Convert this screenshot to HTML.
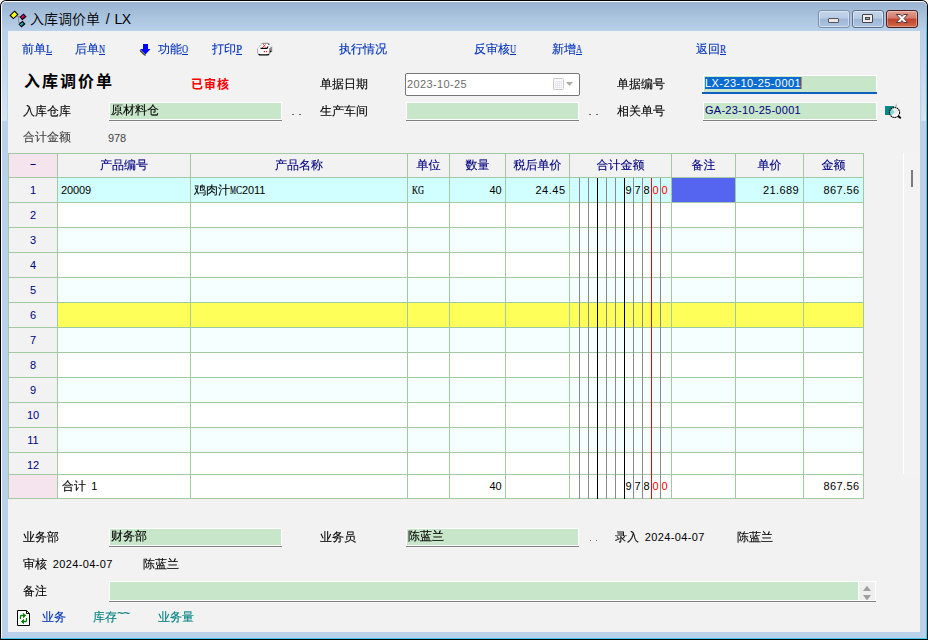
<!DOCTYPE html>
<html><head><meta charset="utf-8"><title>入库调价单 / LX</title>
<style>
*{box-sizing:border-box}
html,body{margin:0;padding:0}
body{width:928px;height:640px;overflow:hidden;background:#fff;position:relative;
 font-family:"Liberation Sans","WenQuanYi Zen Hei","Noto Sans CJK SC",sans-serif;font-size:12px;line-height:14px;color:#000}
.a{position:absolute}
.g{position:absolute;left:0;top:0;width:0;height:0}
.t{position:absolute;white-space:nowrap;font-size:12px;line-height:14px;height:14px;-webkit-text-stroke:0.12px currentColor}
.lk{color:#0033bb}
.tl{color:#008080}
.nv{color:#000080}
.gy{color:#444}
.fld{position:absolute;background:#c8e6c9;border:1px solid #fff;box-shadow:0 1px 0 #808080,0 2px 0 #f7f7f7}
.hl{position:absolute;height:1px;background:#a3c9a3;left:8px;width:856px}
.vl{position:absolute;width:1px;background:#a3c9a3;top:153px;height:346px}
.ml{position:absolute;width:1px;top:178px;height:321px}
.hd{-webkit-text-stroke:0.12px currentColor;position:absolute;top:158px;height:14px;line-height:14px;text-align:center;color:#000080;white-space:nowrap}
.rn{-webkit-text-stroke:0.12px currentColor;position:absolute;left:9px;width:48px;text-align:center;color:#000080;height:14px;line-height:14px}
.n{letter-spacing:-0.67px}
.d{font-size:11px;-webkit-text-stroke:0}
.r{text-align:right}
.k{display:inline-block;transform-origin:0 50%;font-size:12px;font-family:"Liberation Serif",serif;-webkit-text-stroke:0.2px currentColor}
</style></head>
<body>
<div class="g" id="window">
<div class="a" style="left:0;top:0;width:928px;height:640px;background:#000;border-radius:6px 6px 0 0"></div>
<div class="a" style="left:1px;top:1px;width:926px;height:638px;background:#fff;border-radius:5px 5px 0 0"></div>
<div class="a" style="left:2px;top:2px;width:925px;height:637px;border-radius:4px 5px 0 0;background:linear-gradient(#99b4d1 0px,#b9d1ea 29px,#b9d1ea 100%)"></div>
<div class="a" style="left:1px;top:638px;width:926px;height:1px;background:#35cdea"></div>
<div class="a" style="left:926px;top:8px;width:1px;height:631px;background:linear-gradient(rgba(53,205,234,0),#35cdea 24px)"></div>
<div class="a" style="left:8px;top:31px;width:912px;height:601px;background:#f2f2f2"></div>
<div class="a" style="left:2px;top:31px;width:5px;height:90px;background:linear-gradient(rgba(255,255,255,0),rgba(255,255,255,.42))"></div>
<div class="a" style="left:921px;top:31px;width:5px;height:90px;background:linear-gradient(rgba(255,255,255,0),rgba(255,255,255,.42))"></div>
</div>
<div class="g" id="titlebar">
<svg class="a" style="left:9px;top:10px" width="19" height="19" viewBox="0 0 19 19"><path d="M7.7 6.5H11.5M9.5 6.5V12.5H11.5" fill="none" stroke="#909090" stroke-width="1"/><path d="M5.5 1.2L8.8 4.6 4.4 8.6 1.2 5.4z" fill="#ffff00" stroke="#000" stroke-width="1.1"/><path d="M14.5 4.2L16.8 6.6 13.4 9.5 11.3 7.1z" fill="#ff00c8"/><path d="M15.4 5.100L16.8 6.6 13.4 9.5 12.400 8.400z" fill="#c00030"/><path d="M14.5 4.2L16.8 6.6 13.4 9.5 11.3 7.1z" fill="none" stroke="#000" stroke-width="1.1"/><path d="M13.4 11.500L15.700 13.900 12.500 16.700 10.200 14.300z" fill="#00e0e0"/><path d="M14.400 12.500L15.700 13.900 12.500 16.700 11.400 15.500z" fill="#009090"/><path d="M13.4 11.500L15.700 13.900 12.500 16.700 10.200 14.300z" fill="none" stroke="#000" stroke-width="1.1"/></svg>
<div class="t" style="left:30px;top:10px;font-size:14px;line-height:18px;height:18px;font-family:'Liberation Sans','Noto Sans CJK SC',sans-serif;font-weight:350;color:#000;-webkit-text-stroke:0">入库调价单<span style="word-spacing:2.500px;letter-spacing:-0.700px"> / LX</span></div>
<div class="a" style="left:818px;top:10px;width:32px;height:18px;border:1px solid #7d91ad;border-radius:3px;background:linear-gradient(#c3d5ea 0,#b7cbe4 45%,#9db6d4 50%,#adc5e2 100%);box-shadow:inset 0 0 0 1px rgba(255,255,255,.45)"></div>
<div class="a" style="left:828px;top:18px;width:11px;height:5px;border:1px solid #555;border-radius:1px;background:#e8e8e8"></div>
<div class="a" style="left:852px;top:10px;width:32px;height:18px;border:1px solid #5f7088;border-radius:3px;background:linear-gradient(#c3d5ea 0,#b7cbe4 45%,#9db6d4 50%,#adc5e2 100%);box-shadow:inset 0 0 0 1px rgba(255,255,255,.45)"></div>
<div class="a" style="left:862px;top:14px;width:11px;height:9px;border:1px solid #444;border-radius:1px;background:#eee"></div>
<div class="a" style="left:865px;top:17px;width:5px;height:3px;border:1px solid #444;background:#8fa9c9"></div>
<div class="a" style="left:886px;top:10px;width:32px;height:18px;border:1px solid #4b1d1d;border-radius:3px;background:linear-gradient(#e0a093 0,#d4796a 45%,#c2402b 50%,#cf6a4b 100%);box-shadow:inset 0 0 0 1px rgba(255,255,255,.35)"></div>
<svg class="a" style="left:895px;top:13px" width="14" height="11" viewBox="0 0 14 11"><path d="M1.300 1.500h4l1.700 1.900 1.700-1.900h4L9 5.500l3.700 4h-4L7 7.600 5.300 9.500h-4L5 5.500z" fill="#fff" stroke="#53343a" stroke-width="1" stroke-linejoin="round"/></svg>
</div>
<div class="g" id="toolbar">
<a class="t lk" style="left:22px;top:42px">前单<u class="k" style="transform:scaleX(0.819);margin-right:-1.33px">L</u></a>
<a class="t lk" style="left:75px;top:42px">后单<u class="k" style="transform:scaleX(0.692);margin-right:-2.67px">N</u></a>
<a class="t lk" style="left:158px;top:42px">功能<u class="k" style="transform:scaleX(0.692);margin-right:-2.67px">O</u></a>
<a class="t lk" style="left:212px;top:42px">打印<u class="k" style="transform:scaleX(0.899);margin-right:-0.67px">P</u></a>
<a class="t lk" style="left:339px;top:42px">执行情况</a>
<a class="t lk" style="left:474px;top:42px">反审核<u class="k" style="transform:scaleX(0.692);margin-right:-2.67px">U</u></a>
<a class="t lk" style="left:552px;top:42px">新增<u class="k" style="transform:scaleX(0.692);margin-right:-2.67px">A</u></a>
<a class="t lk" style="left:696px;top:42px">返回<u class="k" style="transform:scaleX(0.750);margin-right:-2.00px">R</u></a>
<svg class="a" style="left:139px;top:43px" width="13" height="13" viewBox="0 0 13 13"><path d="M1 7.500l4.500 4.500h1.500" stroke="#3c3c10" stroke-width="1.2" fill="none"/><path d="M4 1h5v5h2.500L6.500 11.500 1 6h3z" fill="#0000ff"/></svg>
<svg class="a" style="left:257px;top:42px" width="16" height="14" viewBox="0 0 16 14"><path d="M5 1.300H12L11.500 3 14.800 4.200 12 6.500H0.800z" fill="#fff"/><path d="M5 1.300H11.800" stroke="#777" stroke-width="0.9" fill="none"/><path d="M5 1.300L0.600 6.800" stroke="#999" stroke-width="0.9" fill="none" stroke-dasharray="1.3 0.7"/><path d="M11.200 2.300h1.200" stroke="#000" stroke-width="1.100"/><rect x="0.500" y="6.300" width="11.700" height="6.400" rx="1.300" fill="#fff"/><path d="M0.700 7v4.500" stroke="#999" stroke-width="0.900"/><path d="M12 6.500L15.200 4.200V9.300L12 12.600z" fill="#8c8c8c"/><path d="M11.500 4.500L15 4.100" stroke="#ddd" stroke-width="0.800"/><path d="M3.500 6.400H10L11 4.400" stroke="#000" stroke-width="1.100" fill="none"/><path d="M1.500 12L2.500 12.800H11L12 12" stroke="#000" stroke-width="1.300" fill="none"/><path d="M5.200 5.800L8.800 2.300M6.300 2.300L8.800 5.500" stroke="#e80000" stroke-width="1" stroke-dasharray="1 0.5"/><rect x="6.800" y="9" width="1.200" height="1.200" fill="#f00"/><rect x="8.900" y="9" width="1.200" height="1.200" fill="#f00"/><rect x="13" y="8.800" width="1.200" height="1.200" fill="#000"/></svg>
</div>
<div class="g" id="form-header">
<div class="t" style="left:24px;top:72px;font-family:'Liberation Sans','Noto Sans CJK SC',sans-serif;font-weight:bold;font-size:16px;line-height:20px;height:20px;letter-spacing:2px;-webkit-text-stroke:0">入库调价单</div>
<div class="t" style="left:191px;top:78px;font-family:'Liberation Sans','Noto Sans CJK SC',sans-serif;font-weight:bold;color:#ff0000;letter-spacing:1px;-webkit-text-stroke:0">已审核</div>
<div class="t" style="left:320px;top:77px">单据日期</div>
<div class="a" style="left:405px;top:73px;width:175px;height:23px;border:1px solid #767676;border-radius:2px;background:#fff"></div>
<div class="t d" style="left:407px;top:77px;color:#6d6d6d;letter-spacing:0.37px">2023-10-25</div>
<svg class="a" style="left:553px;top:78px" width="22" height="12" viewBox="0 0 22 12"><rect x="0.5" y="0.5" width="10" height="11" rx="1" fill="#fdfdfd" stroke="#cfc6c6"/><rect x="2" y="3" width="7" height="7" fill="#e3e7f3"/><path d="M3.500 4.600h0.010M5.500 4.600h0.010M7.500 4.600h0.010M3.500 6.600h0.010M5.500 6.600h0.010M7.500 6.600h0.010M3.500 8.600h0.010M5.500 8.600h0.010M7.500 8.600h0.010" stroke="#fff" stroke-width="1.100" stroke-linecap="square"/><path d="M13 4h7l-3.500 4z" fill="#adada6"/></svg>
<div class="t" style="left:617px;top:77px">单据编号</div>
<div class="a" style="left:703px;top:75px;width:174px;height:17px;background:#c8e6c9;border:1px solid #fff;border-bottom:none"></div>
<div class="a" style="left:702px;top:92px;width:175px;height:2px;background:#0e5fbf"></div>
<div class="a" style="left:705px;top:77px;width:96px;height:12px;background:#0b6bd0"></div>
<div class="a" style="left:801px;top:77px;width:1px;height:12px;background:#f08020"></div>
<div class="t d" style="left:705px;top:76px;color:#fff;letter-spacing:0.42px">LX-23-10-25-0001</div>
<div class="t" style="left:23px;top:104px">入库仓库</div>
<div class="fld" style="left:109px;top:102px;width:173px;height:18px"></div>
<div class="t" style="left:111px;top:103px">原材料仓</div>
<div class="a" style="left:292px;top:114px;width:2px;height:1px;background:#6a6a6a"></div><div class="a" style="left:299px;top:114px;width:2px;height:1px;background:#6a6a6a"></div>
<div class="t" style="left:320px;top:104px">生产车间</div>
<div class="fld" style="left:406px;top:102px;width:173px;height:18px"></div>
<div class="a" style="left:589px;top:114px;width:2px;height:1px;background:#6a6a6a"></div><div class="a" style="left:596px;top:114px;width:2px;height:1px;background:#6a6a6a"></div>
<div class="t" style="left:617px;top:104px">相关单号</div>
<div class="fld" style="left:703px;top:102px;width:174px;height:18px"></div>
<div class="t nv d" style="left:705px;top:103px;letter-spacing:0.26px">GA-23-10-25-0001</div>
<svg class="a" style="left:885px;top:103px" width="17" height="16" viewBox="0 0 17 16"><path d="M9 3.500l3-3.300v4z" fill="#c4c4c4"/><rect x="0" y="3" width="9" height="9" fill="#008888"/><circle cx="9.600" cy="9.500" r="5" fill="#fafafa" stroke="#000" stroke-width="1.100" stroke-dasharray="1.600 0.500"/><path d="M5.500 7.500l3 3M5.500 9.500l2 2M6.500 6.500l3 3M5.500 10.500l3-3M5.500 8.500l2-2M6.500 11.500l3-3" stroke="#00a0a0" stroke-width="0.800" stroke-dasharray="0.900 0.600"/><path d="M9.500 6.500l3 3M9.500 8.500l2.500 2.500M10.500 5.500l2.500 2.500M9.500 11.500l3-3M9.500 9.500l3-3" stroke="#cfcfcf" stroke-width="0.700" stroke-dasharray="0.900 0.600"/><path d="M13 13l2.800 2.200" stroke="#000" stroke-width="1.800"/></svg>
<div class="t gy" style="left:23px;top:130px">合计金额</div>
<div class="t gy d" style="left:108px;top:131px;letter-spacing:-0.12px">978</div>
</div>
<div class="g" id="grid">
<div class="a" style="left:8px;top:153px;width:856px;height:25px;background:#f2f2f2"></div>
<div class="a" style="left:8px;top:153px;width:50px;height:25px;background:#f5e4ee"></div>
<div class="a" style="left:8px;top:178px;width:50px;height:297px;background:#f2f2f2"></div>
<div class="a" style="left:58px;top:178px;width:805px;height:24px;background:#d1fefe"></div>
<div class="a" style="left:58px;top:203px;width:805px;height:24px;background:#fff"></div>
<div class="a" style="left:58px;top:228px;width:805px;height:24px;background:#f5ffff"></div>
<div class="a" style="left:58px;top:253px;width:805px;height:24px;background:#fff"></div>
<div class="a" style="left:58px;top:278px;width:805px;height:24px;background:#f5ffff"></div>
<div class="a" style="left:58px;top:303px;width:805px;height:24px;background:#ffff5a"></div>
<div class="a" style="left:58px;top:328px;width:805px;height:24px;background:#f5ffff"></div>
<div class="a" style="left:58px;top:353px;width:805px;height:24px;background:#fff"></div>
<div class="a" style="left:58px;top:378px;width:805px;height:24px;background:#f5ffff"></div>
<div class="a" style="left:58px;top:403px;width:805px;height:24px;background:#fff"></div>
<div class="a" style="left:58px;top:428px;width:805px;height:24px;background:#f5ffff"></div>
<div class="a" style="left:58px;top:453px;width:805px;height:21px;background:#fff"></div>
<div class="a" style="left:8px;top:475px;width:50px;height:23px;background:#f5e4ee"></div>
<div class="a" style="left:58px;top:475px;width:805px;height:23px;background:#fff"></div>
<div class="a" style="left:672px;top:178px;width:63px;height:24px;background:#5565ef"></div>
<div class="hl" style="top:153px"></div>
<div class="hl" style="top:177px"></div>
<div class="hl" style="top:202px"></div>
<div class="hl" style="top:227px"></div>
<div class="hl" style="top:252px"></div>
<div class="hl" style="top:277px"></div>
<div class="hl" style="top:302px"></div>
<div class="hl" style="top:327px"></div>
<div class="hl" style="top:352px"></div>
<div class="hl" style="top:377px"></div>
<div class="hl" style="top:402px"></div>
<div class="hl" style="top:427px"></div>
<div class="hl" style="top:452px"></div>
<div class="hl" style="top:474px"></div>
<div class="hl" style="top:498px"></div>
<div class="vl" style="left:8px"></div>
<div class="vl" style="left:57px"></div>
<div class="vl" style="left:190px"></div>
<div class="vl" style="left:407px"></div>
<div class="vl" style="left:449px"></div>
<div class="vl" style="left:505px"></div>
<div class="vl" style="left:569px"></div>
<div class="vl" style="left:671px"></div>
<div class="vl" style="left:735px"></div>
<div class="vl" style="left:803px"></div>
<div class="vl" style="left:863px"></div>
<div class="ml" style="left:579px;background:#8a8a8a"></div>
<div class="ml" style="left:588px;background:#8a8a8a"></div>
<div class="ml" style="left:597px;background:#000"></div>
<div class="ml" style="left:606px;background:#8a8a8a"></div>
<div class="ml" style="left:615px;background:#8a8a8a"></div>
<div class="ml" style="left:624px;background:#000"></div>
<div class="ml" style="left:633px;background:#8a8a8a"></div>
<div class="ml" style="left:642px;background:#8a8a8a"></div>
<div class="ml" style="left:651px;background:#ff0000"></div>
<div class="ml" style="left:660px;background:#8a8a8a"></div>
<div class="hd" style="left:9px;width:48px"><span style="position:relative;top:-1px"><span class="k" style="transform:scaleX(1.501);margin-right:2.00px">-</span></span></div>
<div class="hd" style="left:58px;width:132px">产品编号</div>
<div class="hd" style="left:191px;width:216px">产品名称</div>
<div class="hd" style="left:408px;width:41px">单位</div>
<div class="hd" style="left:450px;width:55px">数量</div>
<div class="hd" style="left:506px;width:63px">税后单价</div>
<div class="hd" style="left:570px;width:101px">合计金额</div>
<div class="hd" style="left:672px;width:63px">备注</div>
<div class="hd" style="left:736px;width:67px">单价</div>
<div class="hd" style="left:804px;width:59px">金额</div>
<div class="rn d" style="top:183px">1</div>
<div class="rn d" style="top:208px">2</div>
<div class="rn d" style="top:233px">3</div>
<div class="rn d" style="top:258px">4</div>
<div class="rn d" style="top:283px">5</div>
<div class="rn d" style="top:308px">6</div>
<div class="rn d" style="top:333px">7</div>
<div class="rn d" style="top:358px">8</div>
<div class="rn d" style="top:383px">9</div>
<div class="rn d" style="top:408px">10</div>
<div class="rn d" style="top:433px">11</div>
<div class="rn d" style="top:458px">12</div>
<div class="t d" style="left:61px;top:183px;letter-spacing:-0.12px">20009</div>
<div class="t" style="left:194px;top:183px">鸡肉汁<span class="k" style="transform:scaleX(0.562);margin-right:-4.67px">M</span><span class="k" style="transform:scaleX(0.750);margin-right:-2.00px">C</span><span class="d" style="letter-spacing:-0.12px">2011</span></div>
<div class="t" style="left:412px;top:183px"><span class="k" style="transform:scaleX(0.692);margin-right:-2.67px">K</span><span class="k" style="transform:scaleX(0.692);margin-right:-2.67px">G</span></div>
<div class="t d r" style="left:451.5px;width:50px;top:183px;letter-spacing:-0.12px">40</div>
<div class="t d r" style="left:509.5px;width:56px;top:183px;letter-spacing:0.5px">24.45</div>
<div class="t d r" style="left:739px;width:60px;top:183px;letter-spacing:0.4px">21.689</div>
<div class="t d r" style="left:805.5px;width:54px;top:183px;letter-spacing:0.4px">867.56</div>
<div class="t d" style="left:625px;top:183px;color:#000;width:7px;text-align:center">9</div>
<div class="t d" style="left:634px;top:183px;color:#000;width:7px;text-align:center">7</div>
<div class="t d" style="left:643px;top:183px;color:#000;width:7px;text-align:center">8</div>
<div class="t d" style="left:652px;top:183px;color:#ff0000;width:7px;text-align:center">0</div>
<div class="t d" style="left:661px;top:183px;color:#ff0000;width:7px;text-align:center">0</div>
<div class="t" style="left:62px;top:479px;word-spacing:2px">合计 <span class="d">1</span></div>
<div class="t d r" style="left:451.5px;width:50px;top:479px;letter-spacing:-0.12px">40</div>
<div class="t d r" style="left:805.5px;width:54px;top:479px;letter-spacing:0.4px">867.56</div>
<div class="t d" style="left:625px;top:479px;color:#000;width:7px;text-align:center">9</div>
<div class="t d" style="left:634px;top:479px;color:#000;width:7px;text-align:center">7</div>
<div class="t d" style="left:643px;top:479px;color:#000;width:7px;text-align:center">8</div>
<div class="t d" style="left:652px;top:479px;color:#ff0000;width:7px;text-align:center">0</div>
<div class="t d" style="left:661px;top:479px;color:#ff0000;width:7px;text-align:center">0</div>
<div class="a" style="left:903px;top:153px;width:17px;height:321px;background:#f3f3f3;border-left:1px solid #fff"></div>
<div class="a" style="left:911px;top:170px;width:2px;height:17px;background:#7c7c7c"></div>
</div>
<div class="g" id="form-footer">
<div class="t" style="left:23px;top:530px">业务部</div>
<div class="fld" style="left:109px;top:528px;width:173px;height:18px"></div>
<div class="t" style="left:111px;top:529px">财务部</div>
<div class="t" style="left:320px;top:530px">业务员</div>
<div class="fld" style="left:406px;top:528px;width:173px;height:18px"></div>
<div class="t" style="left:408px;top:529px">陈蓝兰</div>
<div class="a" style="left:590px;top:540px;width:1px;height:1px;background:#747474"></div><div class="a" style="left:596px;top:540px;width:1px;height:1px;background:#747474"></div>
<div class="t" style="left:615px;top:530px;word-spacing:2.5px">录入 <span class="d" style="letter-spacing:0.37px">2024-04-07</span></div>
<div class="t" style="left:737px;top:530px">陈蓝兰</div>
<div class="t" style="left:23px;top:557px;word-spacing:2.5px">审核 <span class="d" style="letter-spacing:0.37px">2024-04-07</span></div>
<div class="t" style="left:143px;top:557px">陈蓝兰</div>
<div class="t" style="left:23px;top:584px">备注</div>
<div class="fld" style="left:109px;top:581px;width:767px;height:20px"></div>
<div class="a" style="left:858px;top:582px;width:17px;height:18px;background:#efefef;border-left:1px solid #fff"></div>
<svg class="a" style="left:862px;top:582px" width="10" height="18" viewBox="0 0 10 18"><path d="M1 9l4-5.300 4 5.300zM1 13h8l-4 5.500z" fill="#a0a0a0"/></svg>
</div>
<div class="g" id="tabs">
<svg class="a" style="left:16px;top:609px" width="16" height="18" viewBox="0 0 16 18"><path d="M1.5 1.5h9l3 3v12h-12z" fill="#fff" stroke="#000" stroke-width="1"/><path d="M10.5 1.5v3h3" fill="none" stroke="#000" stroke-width="1"/><path d="M4.500 10V7.500Q4.500 6.500 5.500 6.500H8M10.500 9V11.500Q10.500 12.500 9.500 12.500H7" fill="none" stroke="#008000" stroke-width="1.300"/><path d="M7 3.800L10.300 6.500 7 9.200zM8 9.800L4.700 12.500 8 15.200z" fill="#008000"/></svg>
<a class="t lk" style="left:42px;top:610px">业务</a>
<div class="t tl" style="left:93px;top:610px">库存<span style="position:relative;top:-4px;letter-spacing:-1px">~~</span></div>
<a class="t tl" style="left:158px;top:610px">业务量</a>
</div>
</body></html>
